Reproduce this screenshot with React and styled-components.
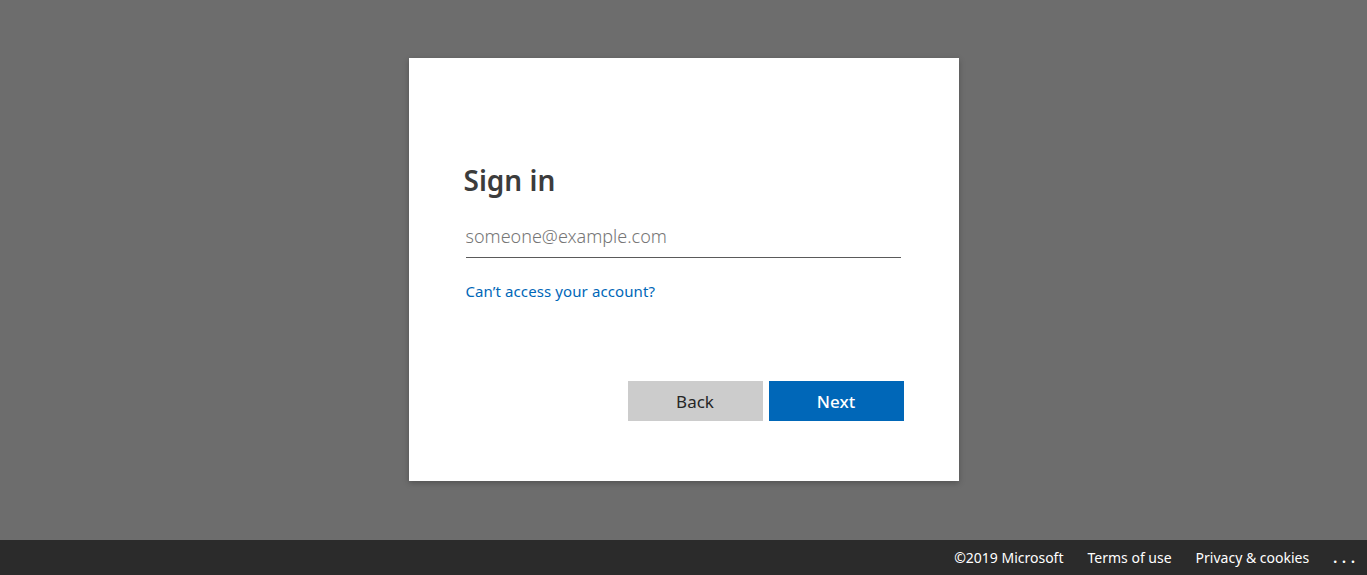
import React from "react";
import styled, { createGlobalStyle } from "styled-components";

const GlobalStyle = createGlobalStyle`
  html, body {
    margin: 0;
    padding: 0;
    height: 100%;
  }
  body {
    font-family: "Noto Sans", "Open Sans", "Liberation Sans", sans-serif;
    background: #6d6d6d;
  }
  #root {
    height: 100%;
  }
`;

const Page = styled.div`
  display: flex;
  flex-direction: column;
  height: 575px;
  background: #6d6d6d;
`;

const Stage = styled.main`
  flex: 1;
  display: flex;
  justify-content: center;
  align-items: flex-start;
  padding-top: 58px;
`;

const Card = styled.div`
  width: 550px;
  box-sizing: border-box;
  background: #fff;
  padding: 104px 55px 60px 55px;
  box-shadow: 0 2px 6px rgba(0, 0, 0, 0.25);
  display: flex;
  flex-direction: column;
`;

const Title = styled.h1`
  margin: 0;
  font-size: 28px;
  line-height: 36px;
  font-weight: 600;
  color: #3c3c3c;
`;

const EmailInput = styled.input`
  box-sizing: border-box;
  margin: 20px 3px 0 2px;
  height: 40px;
  padding: 0 0 4px 0;
  border: none;
  border-bottom: 1px solid #5a5a5a;
  outline: none;
  font-family: inherit;
  font-size: 18px;
  color: #1b1b1b;
  background: transparent;
  &::placeholder {
    color: #767676;
    font-weight: 300;
  }
`;

const HelpLink = styled.a`
  margin: 23px 0 0 2px;
  align-self: flex-start;
  font-size: 15px;
  line-height: 20px;
  letter-spacing: 0.1px;
  color: #0067b8;
  text-decoration: none;
`;

const Actions = styled.div`
  display: flex;
  justify-content: flex-end;
  gap: 6px;
  margin-top: 80px;
`;

const Button = styled.button`
  width: 135px;
  height: 40px;
  border: none;
  font-family: inherit;
  font-size: 17px;
  cursor: pointer;
  background: ${(p) => (p.primary ? "#0067b8" : "#cccccc")};
  color: ${(p) => (p.primary ? "#fff" : "#262626")};
  font-weight: ${(p) => (p.primary ? 500 : 400)};
`;

const Footer = styled.footer`
  height: 35px;
  background: #2b2b2b;
  display: flex;
  justify-content: flex-end;
  align-items: center;
  padding-right: 7px;
`;

const FooterItem = styled.a`
  color: #fff;
  font-size: 14px;
  text-decoration: none;
  margin-left: 24px;
`;

const More = styled.span`
  color: #fff;
  font-size: 14px;
  letter-spacing: 5px;
  margin-left: 24px;
  font-weight: 700;
`;

export default function App() {
  return (
    <Page>
      <GlobalStyle />
      <Stage>
        <Card>
          <Title>Sign in</Title>
          <EmailInput type="email" placeholder="someone@example.com" />
          <HelpLink href="#">Can’t access your account?</HelpLink>
          <Actions>
            <Button>Back</Button>
            <Button primary>Next</Button>
          </Actions>
        </Card>
      </Stage>
      <Footer>
        <FooterItem href="#">©2019 Microsoft</FooterItem>
        <FooterItem href="#">Terms of use</FooterItem>
        <FooterItem href="#">Privacy &amp; cookies</FooterItem>
        <More>...</More>
      </Footer>
    </Page>
  );
}
